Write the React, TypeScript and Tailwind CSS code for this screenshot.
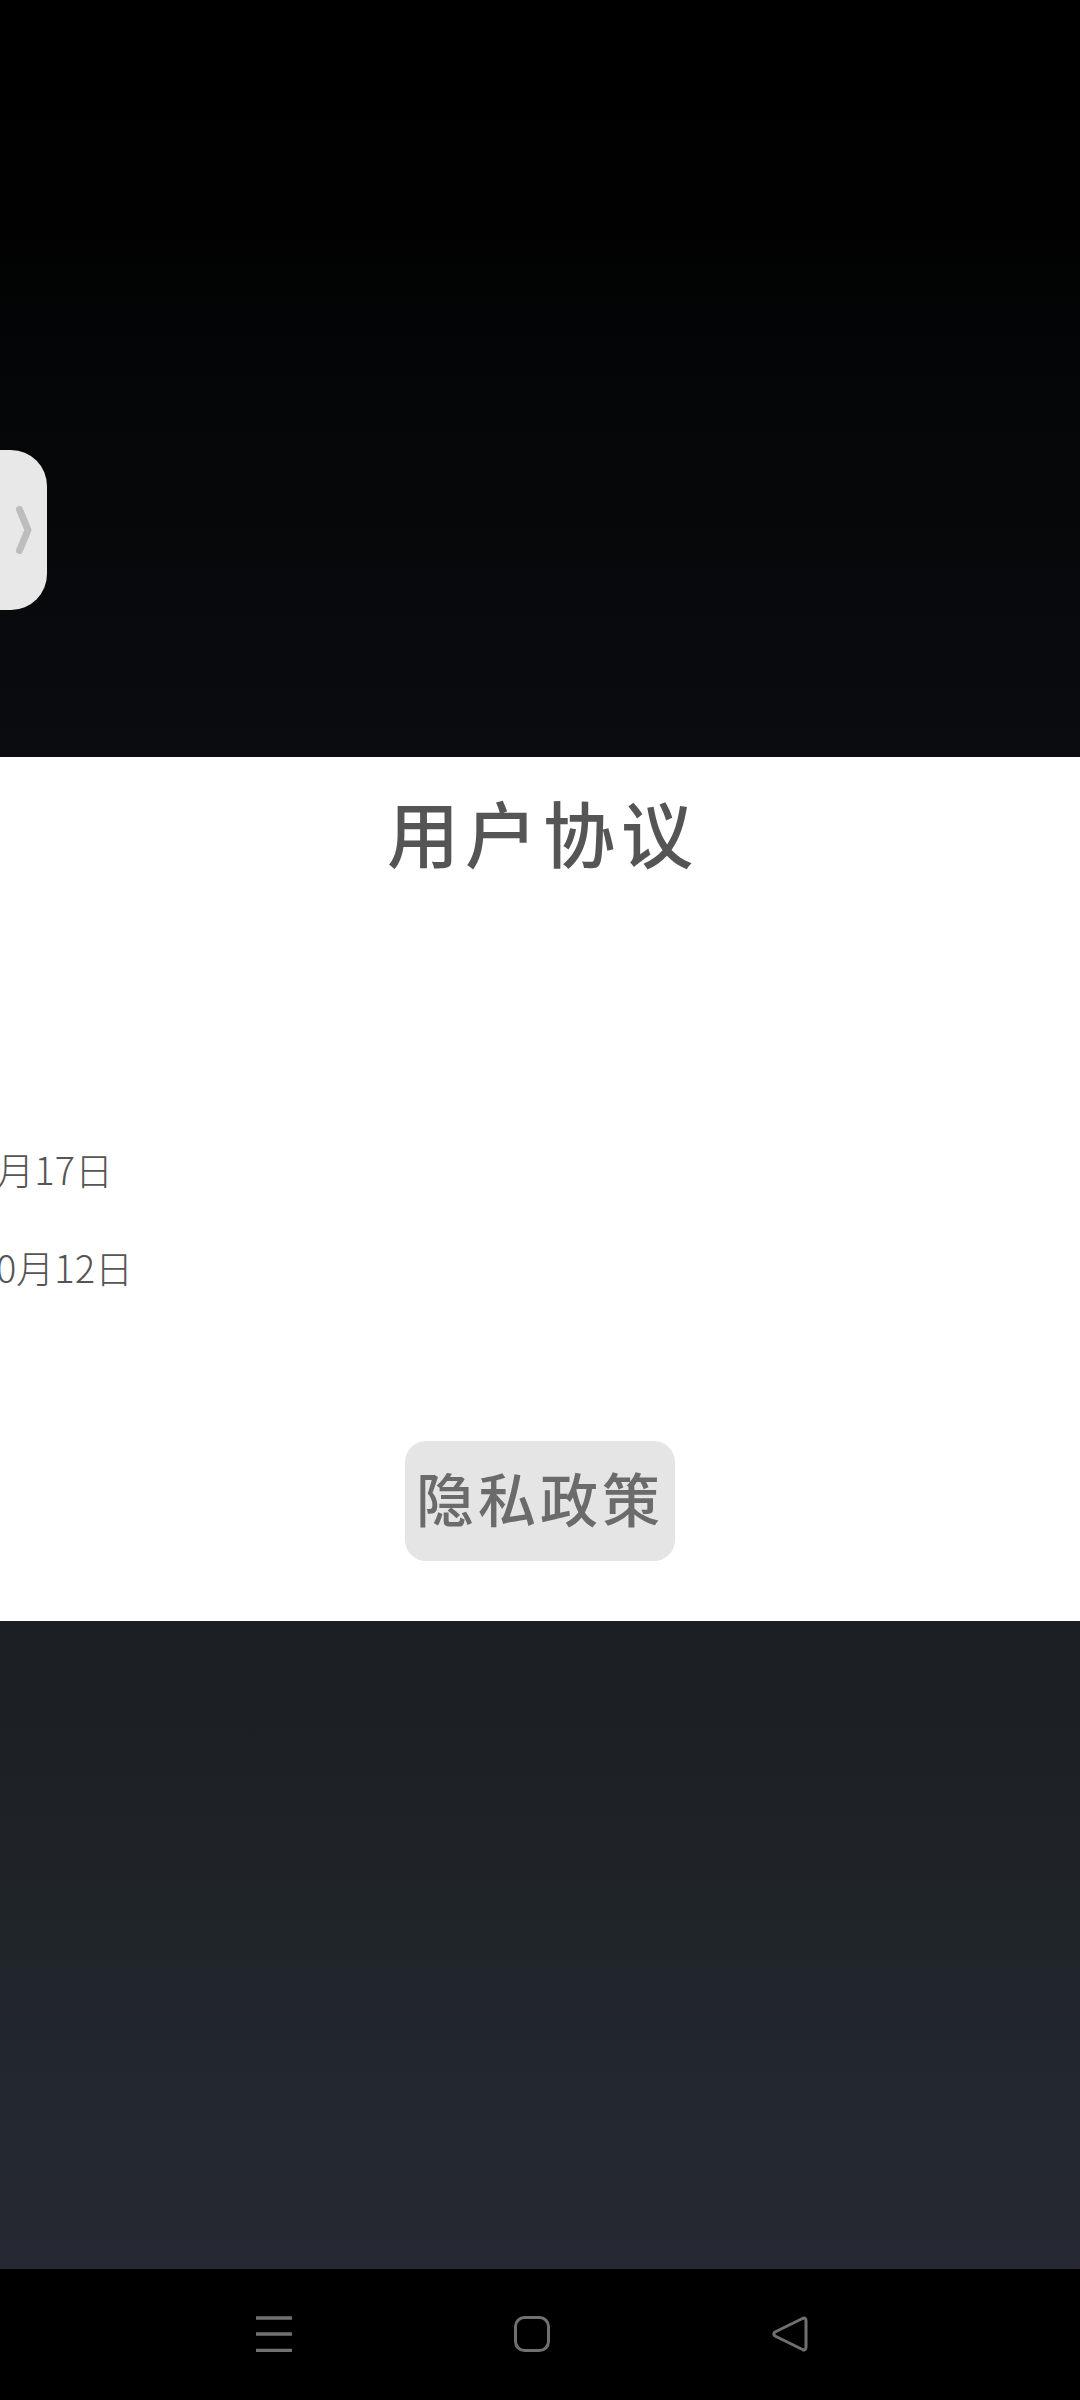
const cjk = "font-['Noto_Sans_CJK_SC',sans-serif]";

function NavBar() {
    return (
        <div className="h-[131px] bg-black flex items-start pl-[256px] pt-[47px] gap-[222px]">
            {/* Recents */}
            <svg width="36" height="36" viewBox="0 0 36 36" fill="none" stroke="#707070" strokeWidth="3.5">
                <path d="M0 2h36M0 18h36M0 34.5h36" />
            </svg>
            {/* Home */}
            <svg width="36" height="36" viewBox="0 0 36 36" fill="none" stroke="#707070" strokeWidth="3">
                <rect x="1.5" y="1.5" width="33" height="33" rx="9" />
            </svg>
            {/* Back */}
            <svg width="36" height="36" viewBox="0 0 36 36" fill="none" stroke="#707070" strokeWidth="3" strokeLinejoin="round">
                <path d="M34 5 Q34 1 30.5 2.5 L3 16 Q0.5 18 3 20 L30.5 33.5 Q34 35 34 31 Z" />
            </svg>
        </div>
    );
}

function DateRow({ text, width, className }: { text: string; width: string; className: string }) {
    return (
        <div className={`flex justify-end overflow-hidden whitespace-nowrap ${width} ${className}`}>
            <span className="text-[38px] leading-[56px] font-light text-[#555555]">{text}</span>
        </div>
    );
}

export default function App() {
    return (
        <div className={`w-[1080px] h-[2400px] flex flex-col overflow-hidden ${cjk}`}>
            {/* Top dimmed area */}
            <div className="h-[757px] pt-[450px] bg-gradient-to-b from-[#000000] via-[#040506] via-45% to-[#0a0c0f]">
                <div className="w-[47px] h-[160px] bg-[#e8e8e8] rounded-r-[36px] flex items-center justify-end pr-[15px]">
                    <svg width="16" height="48" viewBox="0 0 16 48" fill="none" stroke="#bdbdbd" strokeWidth="7" strokeLinecap="round" strokeLinejoin="round">
                        <path d="M3.5 3.5 L12 24 L3.5 44.5" />
                    </svg>
                </div>
            </div>

            {/* Dialog */}
            <div className="h-[864px] bg-white flex flex-col">
                <h1 className="mt-[30px] pl-[6px] text-center text-[72px] leading-[88px] font-medium tracking-[6px] text-[#555555]">
                    用户协议
                </h1>
                <DateRow text="2021年4月17日" width="w-[113px]" className="mt-[266px]" />
                <DateRow text="2020年10月12日" width="w-[133px]" className="mt-[42px]" />
                <div className="mt-[146px] mx-auto w-[270px] h-[120px] pb-[8px] rounded-[21px] bg-[#e5e5e5] flex items-center justify-center">
                    <span className="text-[58px] leading-none font-medium tracking-[4px] text-[#6b6b6b]">隐私政策</span>
                </div>
            </div>

            {/* Bottom dimmed area */}
            <div className="h-[648px] bg-gradient-to-b from-[#1b1e22] via-[#20252a] via-50% to-[#262933]" />

            <NavBar />
        </div>
    );
}
